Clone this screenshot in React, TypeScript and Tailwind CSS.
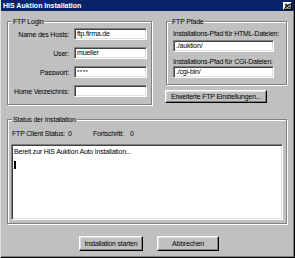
import React from "react";

const sunken =
  "border border-t-[#808080] border-l-[#808080] border-r-white border-b-white shadow-[inset_1px_1px_0_#404040,inset_-1px_-1px_0_#dfdfdf] bg-white";
const raised =
  "border border-t-white border-l-white border-r-black border-b-black shadow-[inset_-1px_-1px_0_#808080,inset_1px_1px_0_#dfdfdf] bg-[#c0c0c0]";

function Group({ label, className, children }: { label: string; className: string; children?: React.ReactNode }) {
  return (
    <div className={`relative border border-[#808080] shadow-[inset_1px_1px_0_#fff,1px_1px_0_#fff] ${className}`}>
      <span className="absolute -top-[5px] left-[4px] bg-[#c0c0c0] px-[1px] leading-[9px]">{label}</span>
      {children}
    </div>
  );
}

function Field({ label, value, pw }: { label: string; value?: string; pw?: boolean }) {
  return (
    <div className="flex items-center">
      <span className="w-[61px] text-right leading-[9px]">{label}</span>
      <div className={`ml-[5px] h-[12px] w-[73px] pl-[2px] leading-[10px] ${sunken}`}>
        {pw ? <span className="text-[6px] leading-[6px] tracking-[0.5px]">****</span> : value}
      </div>
    </div>
  );
}

export default function App() {
  return (
    <div className="flex h-[258px] w-[295px] flex-col whitespace-nowrap border-b border-l border-r border-b-black border-l-[#dfdfdf] border-r-black bg-[#c0c0c0] font-['Liberation_Sans',Arial,sans-serif] text-[7px] tracking-[-0.2px] text-black shadow-[inset_-1px_-1px_0_#808080]">
      {/* title bar */}
      <div className="flex h-[11px] items-center justify-between bg-[#0a246a] pl-[2px] pr-[2px]">
        <span className="text-[7px] font-bold leading-[9px] tracking-normal text-white">HIS Auktion Installation</span>
        <div className={`flex h-[8px] w-[9px] items-center justify-center ${raised}`}>
          <svg width="5" height="4" viewBox="0 0 5 4">
            <path d="M0 0 L5 4 M5 0 L0 4" stroke="black" strokeWidth="1.2" />
          </svg>
        </div>
      </div>

      <div className="flex pt-[10px]">
        {/* FTP Login */}
        <Group label="FTP Login" className="ml-[6px] flex h-[84px] w-[145px] flex-col gap-[7px] pt-[6px]">
          <Field label="Name des Hosts:" value="ftp.firma.de" />
          <Field label="User:" value="mueller" />
          <Field label="Passwort:" pw />
          <Field label="Home Verzeichnis:" value="" />
        </Group>

        <div className="ml-[14px] flex flex-col">
          <Group label="FTP Pfade" className="flex h-[64px] w-[121px] flex-col pl-[6px] pt-[7px]">
            <span className="leading-[9px]">Installations-Pfad für HTML-Dateien:</span>
            <div className={`mt-[2px] h-[12px] w-[101px] pl-[2px] leading-[10px] ${sunken}`}>./auktion/</div>
            <span className="mt-[5px] leading-[9px]">Installations-Pfad für CGI-Dateien:</span>
            <div className={`h-[12px] w-[101px] pl-[2px] leading-[10px] ${sunken}`}>./cgi-bin/</div>
          </Group>
          <button className={`-ml-[1px] mt-[5px] h-[13px] w-[102px] text-center leading-[9px] ${raised}`}>
            Erweiterte FTP Einstellungen...
          </button>
        </div>
      </div>

      {/* Status */}
      <Group label="Status der Installation" className="ml-[6px] mt-[14px] flex h-[105px] w-[280px] flex-col pt-[9px]">
        <div className="flex pl-[4px] leading-[9px]">
          <span className="w-[56px]">FTP Client Status:</span>
          <span className="w-[25px]">0</span>
          <span className="w-[37px]">Fortschritt:</span>
          <span>0</span>
        </div>
        <div className={`ml-[3px] mt-[6px] h-[76px] w-[272px] pl-[2px] pt-[2px] ${sunken}`}>
          <div className="leading-[9px]">Bereit zur HIS Auktion Auto Installation...</div>
          <div className="mt-[5px] h-[8px] w-[2px] bg-black" />
        </div>
      </Group>

      <div className="mt-[12px] flex">
        <button className={`ml-[78px] h-[15px] w-[64px] leading-[9px] ${raised}`}>Installation starten</button>
        <button className={`ml-[14px] h-[15px] w-[62px] leading-[9px] ${raised}`}>Abbrechen</button>
      </div>
    </div>
  );
}
